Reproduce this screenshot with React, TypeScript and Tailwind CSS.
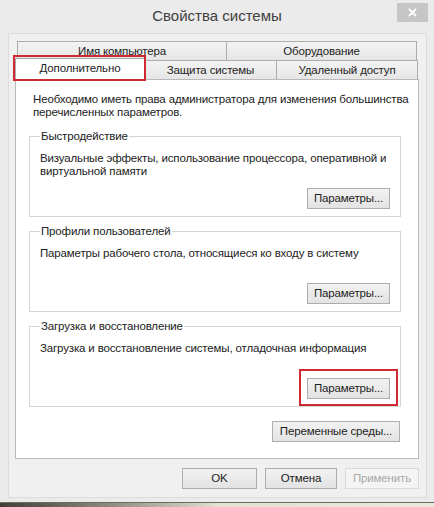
import React from 'react'

const font = "font-['Segoe_UI','Liberation_Sans',Arial,sans-serif]"
const txt = 'text-[11.5px] tracking-[-0.15px] text-[#222]'

function WinButton({ children, wide }: { children: React.ReactNode; wide?: boolean }) {
  return (
    <button
      className={
        'h-[21px] border border-[#adadad] bg-gradient-to-b from-[#f2f2f2] to-[#e3e3e3] text-[11.5px] tracking-[-0.15px] leading-[13px] text-[#1e1e1e] ' +
        (wide ? 'w-[128px]' : 'w-[83px]')
      }
    >
      {children}
    </button>
  )
}

function Group({ title, text, highlight }: { title: string; text: string; highlight?: boolean }) {
  return (
    <fieldset className="border border-[#d5d5d5] h-[87px] pl-[10px] pr-[10px]">
      <legend className={`px-[1px] leading-[13px] ${txt}`}>{title}</legend>
      <div className={`pt-[9px] h-[35px] leading-[13px] -mr-[6px] ${txt}`}>{text}</div>
      <div className="flex justify-end mt-[7px]">
        <div className="relative">
          <WinButton>Параметры...</WinButton>
          {highlight && (
            <span className="absolute -left-[8px] -right-[8px] -top-[6px] -bottom-[7px] border-2 border-[#cf2a33] pointer-events-none" />
          )}
        </div>
      </div>
    </fieldset>
  )
}

export default function App() {
  const tabBase = `h-[19px] border-t border-r border-[#acacac] bg-gradient-to-b from-[#f3f3f3] to-[#e6e6e6] leading-[18px] text-center ${txt}`
  return (
    <div className={`w-[434px] h-[507px] bg-[#ebebeb] flex flex-col ${font}`}>
      {/* title bar */}
      <div className="h-[33px] grid grid-cols-[1fr_auto_1fr] shrink-0">
        <div />
        <div className="pt-[6px] text-[15px] leading-[20px] text-[#404040]">Свойства системы</div>
        <div className="flex justify-end pr-[6px] pt-[3px]">
          <div className="w-[31px] h-[19px] bg-[#c6c6c6] flex items-center justify-center">
            <svg width="9" height="9" viewBox="0 0 9 9">
              <path d="M1 1 L8 8 M8 1 L1 8" stroke="#ffffff" strokeWidth="1.8" />
            </svg>
          </div>
        </div>
      </div>

      {/* client area */}
      <div className="ml-[8px] mr-[7px] h-[465px] shrink-0 bg-[#f0f0f0] border border-[#dcdcdc] pl-[6px] pr-[7px] pt-[7px]">
        {/* tab row 1 */}
        <div className="flex ml-[2px] mr-[2px] border-l border-[#acacac]">
          <div className={`${tabBase} w-[209px]`}>Имя компьютера</div>
          <div className={`${tabBase} flex-1`}>Оборудование</div>
        </div>
        {/* tab row 2 */}
        <div className="flex items-end h-[19px]">
          <div className={`relative z-10 -mb-[1px] w-[130px] h-[22px] bg-white border-t border-l border-r border-[#acacac] leading-[18px] text-center ${txt}`}>
            Дополнительно
            <span className="absolute -left-[3px] -right-[2px] -top-[4px] -bottom-[1px] border-2 border-[#cf2a33] pointer-events-none" />
          </div>
          <div className={`${tabBase} w-[132px]`}>Защита системы</div>
          <div className={`${tabBase} flex-1 mr-[1px]`}>Удаленный доступ</div>
        </div>

        {/* tab panel */}
        <div className="h-[380px] bg-white border border-[#b9b9b9]">
          <div className={`pl-[17px] pr-[2px] pt-[13px] leading-[13px] ${txt}`}>
            Необходимо иметь права администратора для изменения большинства перечисленных параметров.
          </div>
          <div className="pl-[13px] pr-[17px] pt-[11px] flex flex-col gap-[8px]">
            <Group title="Быстродействие" text="Визуальные эффекты, использование процессора, оперативной и виртуальной памяти" />
            <Group title="Профили пользователей" text="Параметры рабочего стола, относящиеся ко входу в систему" />
            <Group title="Загрузка и восстановление" text="Загрузка и восстановление системы, отладочная информация" highlight />
            <div className="flex justify-end mt-[6px] pr-[1px]">
              <WinButton wide>Переменные среды...</WinButton>
            </div>
          </div>
        </div>

        {/* dialog buttons */}
        <div className="flex justify-end gap-[8px] mt-[9px]">
          <button className={`w-[75px] h-[21px] border border-[#adadad] bg-gradient-to-b from-[#f2f2f2] to-[#e3e3e3] ${txt}`}>OK</button>
          <button className={`w-[72px] h-[21px] border border-[#adadad] bg-gradient-to-b from-[#f2f2f2] to-[#e3e3e3] ${txt}`}>Отмена</button>
          <button className="w-[74px] h-[21px] border border-[#dadada] bg-[#f4f4f4] text-[11.5px] tracking-[-0.15px] text-[#a8a8a8]">Применить</button>
        </div>
      </div>

      {/* window bottom edge and desktop behind */}
      <div className="h-[4px] shrink-0" />
      <div className="flex-1 border-t border-[#6b6b60] bg-gradient-to-r from-[#3f3f38] via-[#e4e0d2] to-[#ece8dc]" />
    </div>
  )
}
